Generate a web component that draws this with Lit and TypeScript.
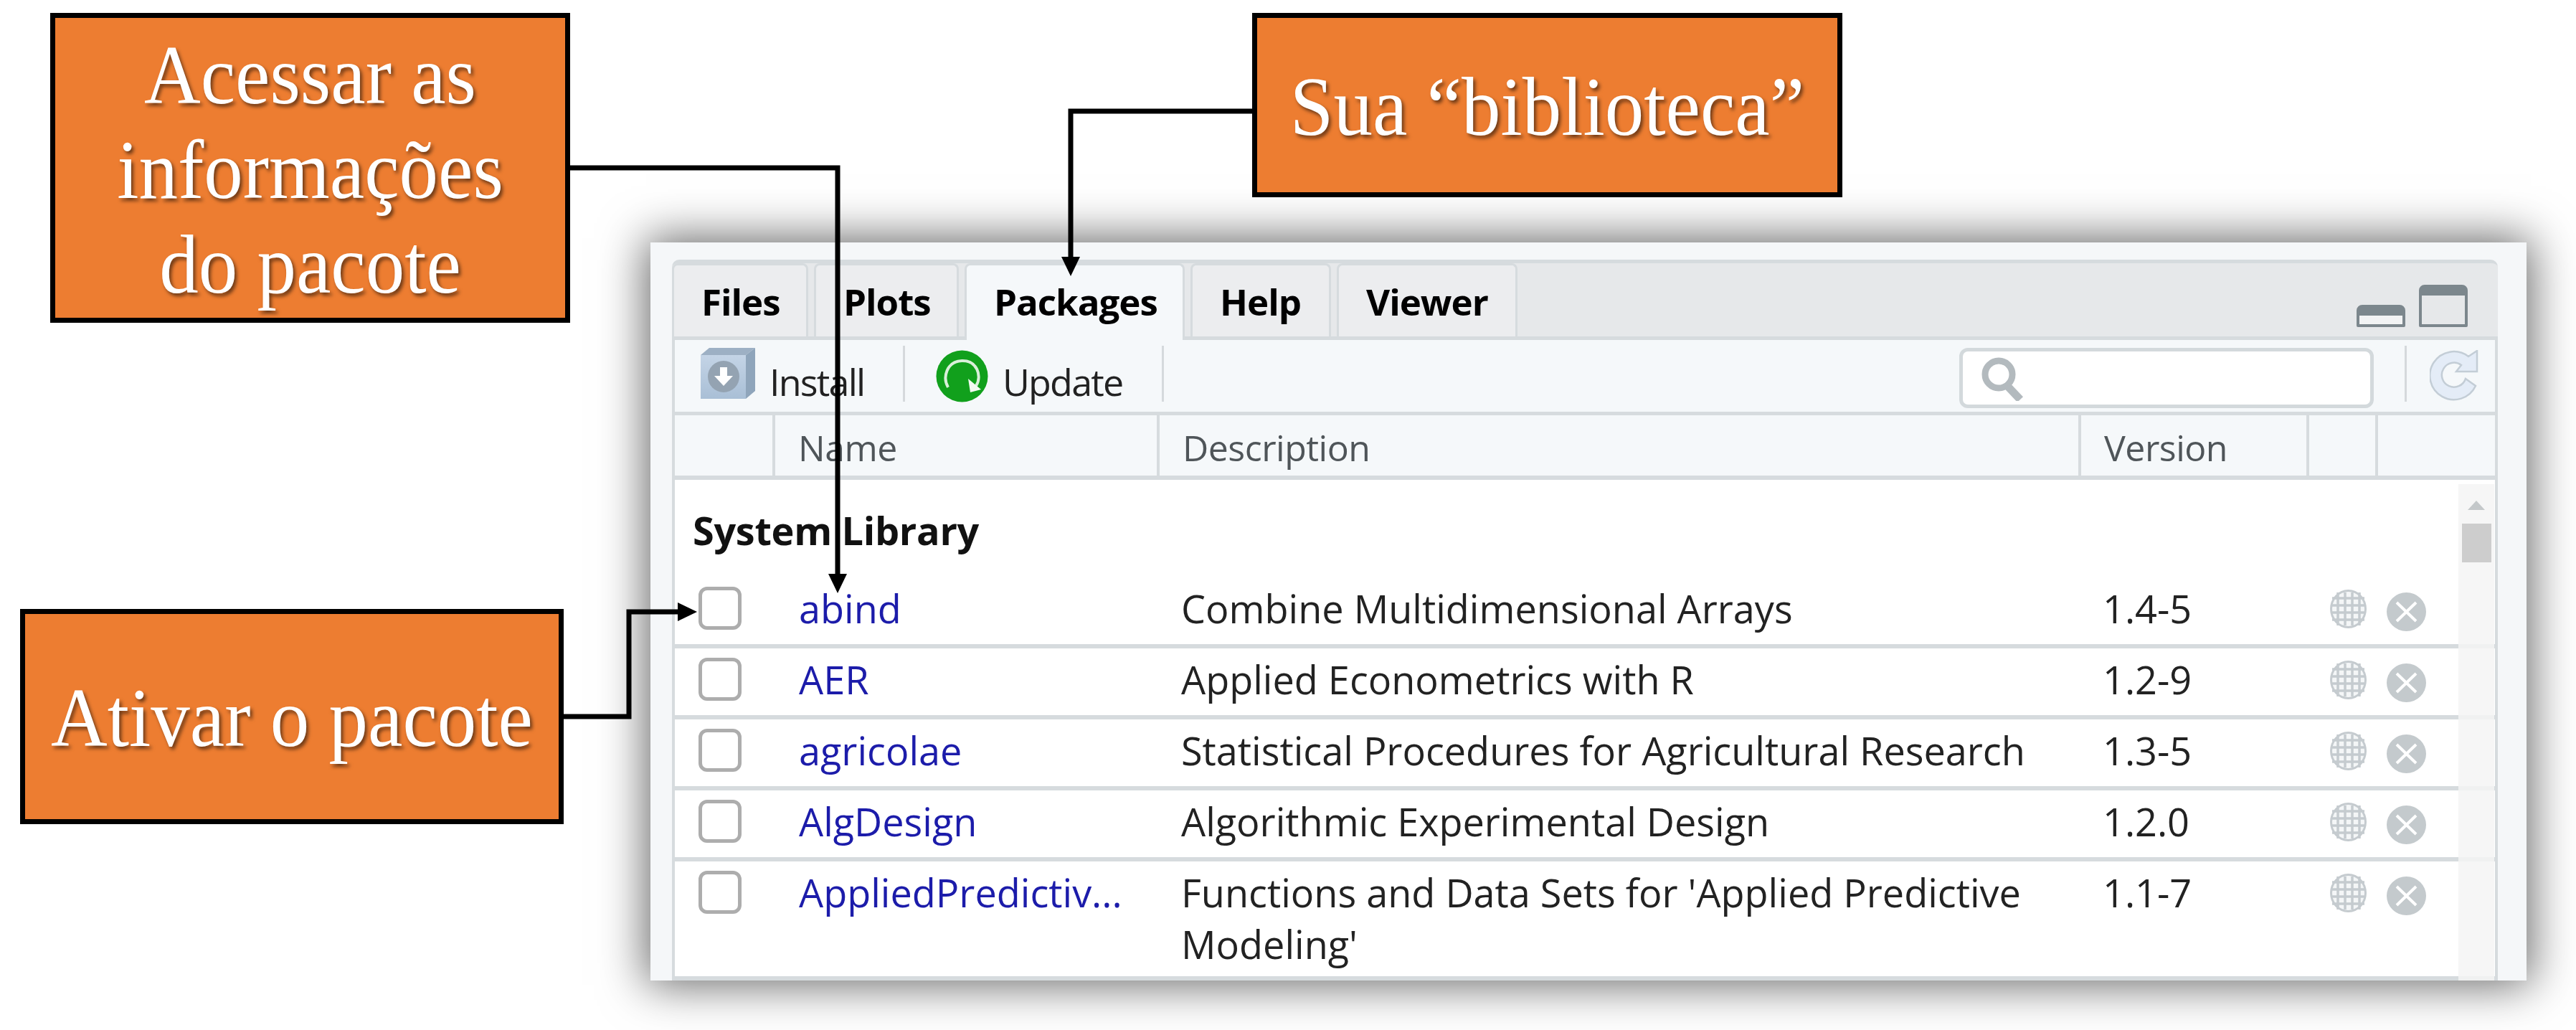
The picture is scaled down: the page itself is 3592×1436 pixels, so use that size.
import { LitElement, html, css, svg } from "lit";
import { customElement } from "lit/decorators.js";

const TABS = ["Files", "Plots", "Packages", "Help", "Viewer"];

const PACKAGES = [
  { name: "abind", desc: "Combine Multidimensional Arrays", version: "1.4-5" },
  { name: "AER", desc: "Applied Econometrics with R", version: "1.2-9" },
  { name: "agricolae", desc: "Statistical Procedures for Agricultural Research", version: "1.3-5" },
  { name: "AlgDesign", desc: "Algorithmic Experimental Design", version: "1.2.0" },
  { name: "AppliedPredictiv...", desc: "Functions and Data Sets for 'Applied Predictive Modeling'", version: "1.1-7" },
];

@customElement("app-root")
class AppRoot extends LitElement {
  static styles = css`
    :host {
      display: block;
      position: relative;
      width: 3592px;
      height: 1436px;
      overflow: hidden;
      background: #fff;
      font-family: "Open Sans", "Noto Sans", sans-serif;
      --line: #d6dbde;
      --cols: 140px 536px 1285px 318px 96px 1fr;
    }

    /* slide objects */
    .callout {
      position: absolute;
      box-sizing: border-box;
      display: flex;
      align-items: center;
      justify-content: center;
      text-align: center;
      border: 7px solid #000;
      background: #ed7d31;
      color: #fff;
      font-family: "Liberation Serif", "Times New Roman", serif;
      font-size: 109px;
      line-height: 124.5px;
      text-shadow: 3px 4px 5px rgba(0, 0, 0, 0.55);
    }
    .callout div {
      transform: scaleY(1.06);
    }
    .callout-info {
      left: 70px;
      top: 18px;
      width: 725px;
      height: 432px;
      padding-top: 8px;
    }
    .callout-activate {
      left: 28px;
      top: 849px;
      width: 758px;
      height: 300px;
      padding-top: 6px;
    }
    .callout-library {
      left: 1746px;
      top: 18px;
      width: 823px;
      height: 257px;
      padding-top: 7px;
    }
    .connectors {
      position: absolute;
      left: 0;
      top: 0;
      pointer-events: none;
    }

    /* pane */
    .pane {
      position: absolute;
      left: 907px;
      top: 338px;
      width: 2616px;
      height: 1029px;
      box-sizing: border-box;
      padding: 24px 40px 0 30px;
      background: #f5f7f9;
      box-shadow: 0 0 60px 6px rgba(0, 0, 0, 0.6);
    }
    .frame {
      height: 100%;
      display: flex;
      flex-direction: column;
    }
    .tabbar {
      display: flex;
      align-items: flex-end;
      gap: 8px;
      height: 112px;
      box-sizing: border-box;
      background: #e6e8ea;
      border-top: 5px solid var(--line);
      border-bottom: 5px solid var(--line);
      border-radius: 10px 10px 0 0;
    }
    .tab {
      box-sizing: border-box;
      height: 102px;
      padding: 14px 0 0 38px;
      background: #ecedef;
      border: 3px solid var(--line);
      border-bottom: 0;
      border-radius: 8px 8px 0 0;
      color: #000;
      font-size: 51px;
      font-weight: 700;
      line-height: 72px;
      letter-spacing: -1px;
    }
    .tab-files { width: 190px; }
    .tab-plots { width: 202px; }
    .tab-packages { width: 307px; }
    .tab-help { width: 196px; }
    .tab-viewer { width: 252px; }
    .tab.active {
      height: 107px;
      margin-bottom: -5px;
      background: #f5f8fa;
      position: relative;
    }
    .winbtns {
      margin-left: auto;
      display: flex;
      align-items: flex-end;
      gap: 19px;
      padding: 0 42px 13px 0;
    }
    .winbtn {
      box-sizing: border-box;
      width: 68px;
      border: 4px solid #7c878d;
      border-top-width: 15px;
      border-radius: 8px 8px 2px 2px;
    }
    .winbtn-min {
      height: 31px;
      background: #f2f3f4;
    }
    .winbtn-max {
      height: 59px;
    }

    .body-frame {
      flex: 1;
      display: flex;
      flex-direction: column;
      min-height: 0;
      border-left: 4px solid var(--line);
      border-right: 4px solid var(--line);
    }
    .toolbar {
      display: flex;
      align-items: flex-start;
      height: 105px;
      box-sizing: border-box;
      padding-right: 22px;
      background: #f5f8fa;
      border-bottom: 5px solid var(--line);
      color: #222;
      font-size: 52px;
      line-height: 72px;
    }
    .tool {
      display: flex;
      box-sizing: border-box;
      gap: 20px;
      letter-spacing: -1.8px;
    }
    .tool-install {
      width: 318px;
      padding: 11px 0 0 36px;
    }
    .tool-update {
      width: 358px;
      padding: 14px 0 0 43px;
    }
    .tool-update span {
      padding-top: 8px;
    }
    .tool-install span {
      padding-top: 11px;
    }
    .divider {
      width: 3px;
      height: 78px;
      margin-top: 8px;
      background: #d5d9dc;
    }
    .search {
      margin: 11px 43px 0 auto;
      box-sizing: border-box;
      width: 578px;
      height: 84px;
      padding: 7px 0 0 24px;
      background: #fff;
      border: 5px solid #d3d9dc;
      border-radius: 12px;
    }
    .refresh {
      margin: 14px 0 0 32px;
    }

    .columns {
      display: grid;
      grid-template-columns: var(--cols);
      height: 90px;
      box-sizing: border-box;
      background: #f5f8fa;
      border-bottom: 6px solid var(--line);
      color: #4f5559;
      font-size: 50px;
      line-height: 72px;
    }
    .col {
      box-sizing: border-box;
      height: 84px;
      padding: 9px 0 0 32px;
      border-right: 4px solid var(--line);
      letter-spacing: -0.5px;
    }
    .col:last-child {
      border-right: 0;
    }

    .list {
      flex: 1;
      position: relative;
      display: flex;
      flex-direction: column;
      min-height: 0;
      background: #fff;
      color: #222;
      font-size: 54px;
      line-height: 72px;
    }
    .group {
      height: 136px;
      box-sizing: border-box;
      padding: 34px 0 0 25px;
      color: #111;
      font-weight: 700;
      letter-spacing: -0.3px;
    }
    .row {
      display: grid;
      grid-template-columns: var(--cols);
      align-items: start;
      height: 99px;
      box-sizing: border-box;
      border-bottom: 6px solid var(--line);
    }
    .row.last {
      flex: 1;
    }
    .check {
      box-sizing: border-box;
      width: 60px;
      height: 60px;
      margin: 13px 0 0 33px;
      border: 5px solid #adadad;
      border-radius: 12px;
    }
    .cell {
      padding: 7px 0 0 30px;
    }
    .name {
      padding-left: 33px;
      color: #1c1caa;
    }
    .globe {
      margin: 17px 0 0 29px;
    }
    .remove {
      margin: 21px 0 0 12px;
    }
    .scroll {
      position: absolute;
      top: 6px;
      right: 1px;
      bottom: 0;
      width: 50px;
      display: flex;
      flex-direction: column;
      align-items: center;
      background: rgba(245, 245, 245, 0.85);
    }
    .scroll-up {
      width: 0;
      height: 0;
      margin-top: 23px;
      border-left: 12px solid transparent;
      border-right: 12px solid transparent;
      border-bottom: 13px solid #c4c8ca;
    }
    .scroll-thumb {
      width: 41px;
      height: 54px;
      margin-top: 19px;
      background: #cdcdcd;
    }
  `;

  renderInstallIcon() {
    return html`<svg width="76" height="72" viewBox="0 0 76 72">
      <defs>
        <linearGradient id="cube" x1="0" y1="0" x2="0" y2="1">
          <stop offset="0" stop-color="#c4d4e6"></stop>
          <stop offset="1" stop-color="#a9bfd6"></stop>
        </linearGradient>
      </defs>
      <path d="M0 10 12 0H76L63 10Z" fill="#9db0c4"></path>
      <path d="M63 10 76 0V60L63 71Z" fill="#8fa5bb"></path>
      <rect x="0" y="10" width="63" height="61" fill="url(#cube)"></rect>
      <circle cx="32" cy="40" r="22" fill="#94a3b2"></circle>
      <path d="M27 27H37V39H45L32 53 19 39H27Z" fill="#fff"></path>
    </svg>`;
  }

  renderUpdateIcon() {
    return html`<svg width="73" height="73" viewBox="0 0 73 73">
      <circle cx="36.5" cy="36.5" r="36" fill="#11a01c"></circle>
      <path d="M17 52C9 38 15 16 36 15S65 36 56 50" fill="none" stroke="#d9efd9" stroke-width="4"></path>
      <path d="M45 40 48 59 63 55Z" fill="#f2faf2"></path>
    </svg>`;
  }

  renderSearchIcon() {
    return html`<svg width="64" height="62" viewBox="0 0 64 62">
      <circle cx="26" cy="25" r="19" fill="none" stroke="#b3babe" stroke-width="9"></circle>
      <path d="M38 41 56 60" fill="none" stroke="#b3babe" stroke-width="11"></path>
    </svg>`;
  }

  renderRefreshIcon() {
    return html`<svg class="refresh" width="69" height="71" viewBox="0 0 69 71">
      <path
        d="M54 9A33.500 33.500 0 1 0 64 50L50 40A17 17 0 1 1 44 21L37 30H66V1Z"
        fill="#e4ecf7"
        stroke="#c3cdd6"
        stroke-width="2.500"
      ></path>
    </svg>`;
  }

  renderGlobe() {
    return html`<svg class="globe" width="51" height="54" viewBox="0 0 51 54">
      <ellipse cx="25.500" cy="27" rx="24" ry="25.500" fill="#f4f6f7" stroke="#c5cbcf" stroke-width="3"></ellipse>
      ${[11, 21, 31, 41].map(
        (x) => svg`<path d="M${x} 4V50" stroke="#c5cbcf" stroke-width="3.500"></path>`
      )}
      ${[12, 22, 32, 42].map(
        (y) => svg`<path d="M3 ${y}H48" stroke="#c5cbcf" stroke-width="3.500"></path>`
      )}
    </svg>`;
  }

  renderRemove() {
    return html`<svg class="remove" width="55" height="54" viewBox="0 0 55 54">
      <ellipse cx="27.500" cy="27" rx="27.500" ry="27" fill="#c4cacd"></ellipse>
      <path d="M14 14 41 40M41 14 14 40" stroke="#fff" stroke-width="4"></path>
    </svg>`;
  }

  render() {
    return html`
      <div class="pane">
        <div class="frame">
          <div class="tabbar">
            ${TABS.map(
              (t) => html`<div class="tab tab-${t.toLowerCase()} ${t === "Packages" ? "active" : ""}">${t}</div>`
            )}
            <div class="winbtns">
              <div class="winbtn winbtn-min"></div>
              <div class="winbtn winbtn-max"></div>
            </div>
          </div>
          <div class="body-frame">
            <div class="toolbar">
              <div class="tool tool-install">${this.renderInstallIcon()}<span>Install</span></div>
              <div class="divider"></div>
              <div class="tool tool-update">${this.renderUpdateIcon()}<span>Update</span></div>
              <div class="divider"></div>
              <div class="search">${this.renderSearchIcon()}</div>
              <div class="divider"></div>
              ${this.renderRefreshIcon()}
            </div>
            <div class="columns">
              <div class="col"></div>
              <div class="col">Name</div>
              <div class="col">Description</div>
              <div class="col">Version</div>
              <div class="col"></div>
              <div class="col"></div>
            </div>
            <div class="list">
              <div class="group">System Library</div>
              ${PACKAGES.map(
                (p, i) => html`<div class="row ${i === PACKAGES.length - 1 ? "last" : ""}">
                  <div class="check"></div>
                  <div class="cell name">${p.name}</div>
                  <div class="cell">${p.desc}</div>
                  <div class="cell">${p.version}</div>
                  ${this.renderGlobe()} ${this.renderRemove()}
                </div>`
              )}
              <div class="scroll">
                <div class="scroll-up"></div>
                <div class="scroll-thumb"></div>
              </div>
            </div>
          </div>
        </div>
      </div>

      <div class="callout callout-info"><div>Acessar as<br />informações<br />do pacote</div></div>
      <div class="callout callout-activate"><div>Ativar o pacote</div></div>
      <div class="callout callout-library"><div>Sua “biblioteca”</div></div>

      <svg class="connectors" width="3592" height="1436" viewBox="0 0 3592 1436">
        <path d="M795 234H1168V805" fill="none" stroke="#000" stroke-width="7"></path>
        <path d="M1168 827 1155 800H1181Z"></path>
        <path d="M786 999H877V853H950" fill="none" stroke="#000" stroke-width="7"></path>
        <path d="M972 853 945 840V866Z"></path>
        <path d="M1746 155H1493V362" fill="none" stroke="#000" stroke-width="7"></path>
        <path d="M1493 385 1480 358H1506Z"></path>
      </svg>
    `;
  }
}
